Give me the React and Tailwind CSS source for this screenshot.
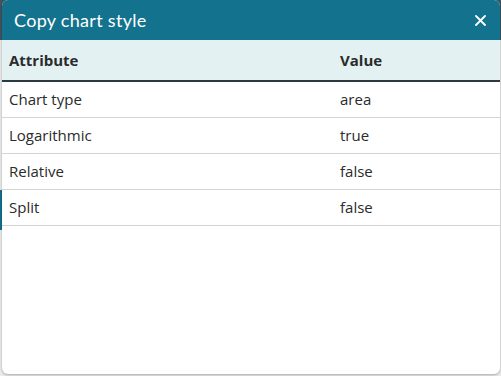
export default function App() {
    const rows = [
        { attribute: "Chart type", value: "area" },
        { attribute: "Logarithmic", value: "true" },
        { attribute: "Relative", value: "false" },
        { attribute: "Split", value: "false" },
    ]

    return (
        <div className="relative w-[501px] h-[376px] overflow-hidden bg-[#ececec]">
            {/* page behind the modal */}
            <div className="h-[40px] bg-[#3f5560]" />
            <div className="ml-0 mt-[150px] w-[2px] h-[40px] bg-[#13718c]" />

            <div className="absolute left-[2px] top-0 right-[1px] bottom-[2px] flex flex-col bg-white rounded-[6px] shadow-[0_1px_3px_rgba(0,0,0,0.3)] overflow-hidden">
                <div className="flex items-center justify-between h-[40px] pl-[12px] pr-[8px] bg-[#13728d] text-white">
                    <h2 className="text-[18px] font-['Lato',sans-serif] tracking-[0.3px]">Copy chart style</h2>
                    <button className="w-[24px] h-[24px] flex items-center justify-center">
                        <svg width="11" height="11" viewBox="0 0 11 11" fill="none" stroke="white" strokeWidth="1.8" strokeLinecap="round">
                            <path d="M1 1L10 10M10 1L1 10" />
                        </svg>
                    </button>
                </div>

                <table className="w-full border-collapse font-['Open_Sans',sans-serif] text-[15px] text-[#2b2b2b]">
                    <thead>
                        <tr className="h-[41px] bg-[#e4f1f3] border-b-[2px] border-[#2d3940]">
                            <th className="text-left font-bold pl-[7px] w-[338px]">Attribute</th>
                            <th className="text-left font-bold">Value</th>
                        </tr>
                    </thead>
                    <tbody>
                        {rows.map(row => (
                            <tr key={row.attribute} className="h-[36px] border-b border-[#d4d4d4]">
                                <td className="pl-[7px]">{row.attribute}</td>
                                <td>{row.value}</td>
                            </tr>
                        ))}
                    </tbody>
                </table>
            </div>
        </div>
    )
}
